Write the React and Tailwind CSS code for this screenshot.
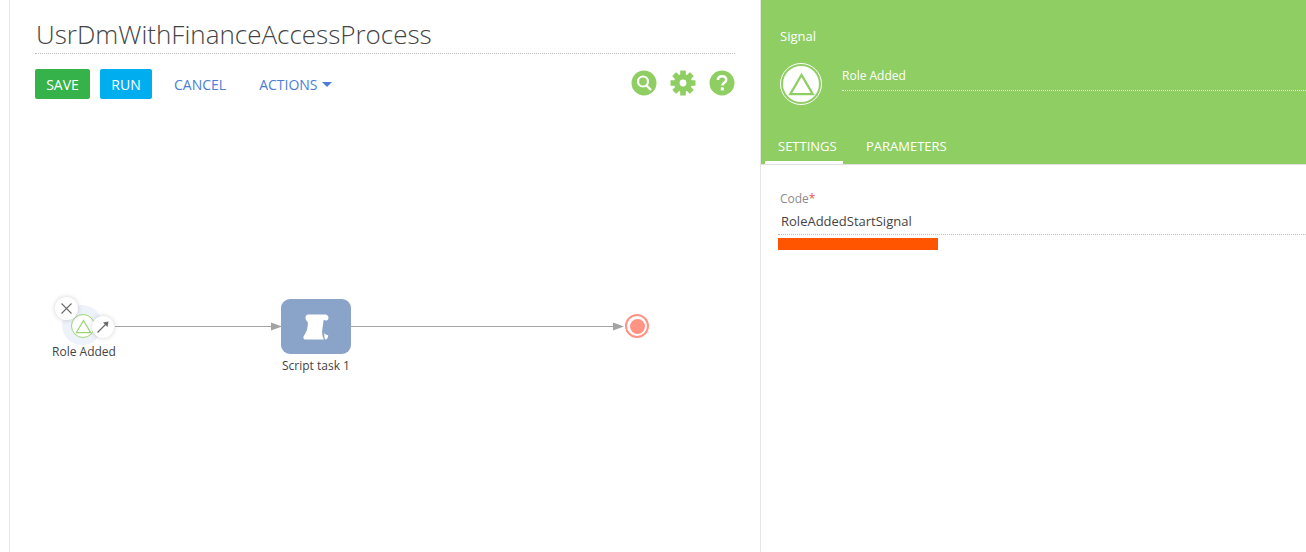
const font = { fontFamily: '"Open Sans", sans-serif' };

function Triangle({ size, color, sw }) {
  return (
    <svg width={size} height={size} viewBox="0 0 24 24" fill="none">
      <path d="M12 3.5 L22 20.5 H2 Z" stroke={color} strokeWidth={sw} strokeLinejoin="miter" />
    </svg>
  );
}

function SearchIcon() {
  return (
    <svg width="26" height="26" viewBox="0 0 26 26">
      <circle cx="13" cy="13" r="12.5" fill="#8fce63" />
      <circle cx="12" cy="11.5" r="5" fill="none" stroke="#fff" strokeWidth="2.2" />
      <path d="M15.5 15.5 L20 20" stroke="#fff" strokeWidth="2.4" />
    </svg>
  );
}

function GearIcon() {
  const teeth = [0, 45, 90, 135, 180, 225, 270, 315];
  return (
    <svg width="26" height="26" viewBox="0 0 26 26">
      {teeth.map((a) => (
        <rect key={a} x="10.2" y="0.5" width="5.6" height="6" rx="0.6" fill="#8fce63" transform={`rotate(${a} 13 13)`} />
      ))}
      <circle cx="13" cy="13" r="9" fill="#8fce63" />
      <circle cx="13" cy="13" r="3.4" fill="#fff" />
    </svg>
  );
}

function HelpIcon() {
  return (
    <svg width="26" height="26" viewBox="0 0 26 26">
      <circle cx="13" cy="13" r="12.5" fill="#8fce63" />
      <path d="M8.9 10 C9 7.4 10.8 6.2 13.1 6.2 C15.5 6.2 17.2 7.6 17.2 9.7 C17.2 12.6 13.3 12.7 13.3 15.6" fill="none" stroke="#fff" strokeWidth="2.5" />
      <rect x="11.8" y="17.4" width="3" height="3" fill="#fff" />
    </svg>
  );
}

function Scroll() {
  return (
    <svg width="26" height="26" viewBox="0 0 26 26" fill="#fff">
      <path d="M5 .5 H22 C24.5 .5 25.8 2.4 25.4 4.4 C25 6.3 23.2 7 22 6.3 C21.2 5.8 20.6 6 20.4 7.4 L19.2 16.5 C19 20 19.4 23 21 25.5 H2.5 C.6 25.5 -.2 23.6 .8 22 C3 19 4.4 15 4.8 11 C5 9 5.1 8 4 7.2 C1.8 5.6 2 .5 5 .5 Z" />
      <path d="M21.4 19 C22.6 20.6 23.8 21.2 25.2 21.2 C25.2 23.8 24 25.5 22.6 25.5 C21.6 25 21 22 21.4 19 Z" />
    </svg>
  );
}

function Canvas() {
  return (
    <div className="relative flex-1 mt-[20px]">
      {/* connectors */}
      <svg className="absolute left-0 top-0" width="751" height="430" fill="none">
        <path d="M105 207.5 H265" stroke="#a3a3a3" strokeWidth="1" />
        <path d="M261 203.5 L272 207.5 L261 211.5 Z" fill="#a3a3a3" />
        <path d="M341 207.5 H605" stroke="#a3a3a3" strokeWidth="1" />
        <path d="M603 203.5 L614 207.5 L603 211.5 Z" fill="#a3a3a3" />
      </svg>

      {/* selected start signal */}
      <div className="absolute left-[52px] top-[186px] w-[40px] h-[40px] rounded-full bg-[#eef2fb]" />
      <div className="absolute left-[61px] top-[195px] w-[24px] h-[24px] rounded-full bg-white border border-[#9bd573] flex items-center justify-center">
        <Triangle size={17} color="#9bd573" sw={1.8} />
      </div>
      <div className="absolute left-[45px] top-[178px] w-[23px] h-[23px] rounded-full bg-white shadow-[0_0_5px_rgba(0,0,0,0.18)] flex items-center justify-center">
        <svg width="13" height="13" viewBox="0 0 13 13" fill="none">
          <path d="M1.5 1.5 L11.5 11.5 M11.5 1.5 L1.5 11.5" stroke="#6b6b6b" strokeWidth="1.1" />
        </svg>
      </div>
      <div className="absolute left-[82px] top-[197px] w-[22px] h-[22px] rounded-full bg-white shadow-[0_0_5px_rgba(0,0,0,0.18)] flex items-center justify-center">
        <svg width="14" height="14" viewBox="0 0 14 14" fill="none">
          <path d="M1.5 12.5 L10 4" stroke="#6b6b6b" strokeWidth="1.2" />
          <path d="M7 2.5 L12.5 1.5 L11.5 7 Z" fill="#6b6b6b" />
        </svg>
      </div>
      <div className="absolute left-[24px] top-[225px] w-[100px] text-center text-[12px] leading-[16px] text-[#444]">Role Added</div>

      {/* script task */}
      <div className="absolute left-[271px] top-[180px] w-[70px] h-[55px] rounded-[9px] bg-[#8aa3c8] flex items-center justify-center">
        <Scroll />
      </div>
      <div className="absolute left-[256px] top-[239px] w-[100px] text-center text-[12px] leading-[16px] text-[#444]">Script task 1</div>

      {/* end */}
      <div className="absolute left-[615px] top-[195px] w-[24px] h-[24px] rounded-full border-2 border-[#ff9384] bg-white flex items-center justify-center">
        <div className="w-[15px] h-[15px] rounded-full bg-[#ff9384]" />
      </div>
    </div>
  );
}

export default function App() {
  return (
    <div className="flex w-[1306px] h-[552px] bg-white overflow-hidden" style={font}>
      <div className="w-[10px] shrink-0 border-r border-[#e6e6e6]" />

      <div className="w-[751px] shrink-0 flex flex-col border-r border-[#e6e6e6]">
        <div className="ml-[25px] mr-[25px] mt-[15px] h-[39px] border-b border-dotted border-[#bdbdbd] pl-[1px]">
          <div className="text-[26px] leading-[39px] font-light text-[#444]">UsrDmWithFinanceAccessProcess</div>
        </div>

        <div className="ml-[25px] mr-[25px] mt-[15px] h-[30px] flex items-center">
          <div className="w-[55px] h-[30px] rounded-[2px] bg-[#35b34a] text-white text-[14px] flex items-center justify-center">SAVE</div>
          <div className="ml-[10px] w-[52px] h-[30px] rounded-[2px] bg-[#00aeef] text-white text-[14px] flex items-center justify-center">RUN</div>
          <div className="ml-[22px] text-[14px] text-[#4b7ed6]">CANCEL</div>
          <div className="ml-[33px] flex items-center text-[14px] text-[#4b7ed6]">
            ACTIONS
            <span className="ml-[4px] w-0 h-0 border-l-[5px] border-r-[5px] border-t-[5px] border-l-transparent border-r-transparent border-t-[#4b7ed6]" />
          </div>
          <div className="ml-auto flex items-center gap-[13px] -mt-[3px]">
            <SearchIcon />
            <GearIcon />
            <HelpIcon />
          </div>
        </div>

        <Canvas />
      </div>

      <div className="flex-1 flex flex-col">
        <div className="h-[165px] bg-[#8fce63] border-b border-[#e0e0e0] flex flex-col text-white">
          <div className="ml-[19px] mt-[27px] text-[13px] leading-[18px]">Signal</div>
          <div className="ml-[19px] mt-[18px] flex">
            <div className="w-[42px] h-[42px] rounded-full border border-white p-[2px] shrink-0">
              <div className="w-full h-full rounded-full bg-white flex items-center justify-center">
                <Triangle size={27} color="#8fce63" sw={2} />
              </div>
            </div>
            <div className="ml-[20px] flex-1 h-[28px] border-b border-dotted border-white text-[12px] leading-[26px]">Role Added</div>
          </div>
          <div className="mt-auto ml-[4px] flex text-[13px]">
            <div className="w-[78px] h-[32px] border-b-[3px] border-white pl-[13px] pt-[5px] leading-[18px]">SETTINGS</div>
            <div className="ml-[23px] pt-[5px] leading-[18px]">PARAMETERS</div>
          </div>
        </div>

        <div className="pl-[17px] pt-[25px]">
          <div className="text-[12px] leading-[18px] text-[#8c8c8c] pl-[2px]">
            Code<span className="text-[#e5554f]">*</span>
          </div>
          <div className="h-[27px] border-b border-dotted border-[#bdbdbd] text-[13px] leading-[26px] text-[#444] pl-[3px]">RoleAddedStartSignal</div>
          <div className="mt-[3px] w-[160px] h-[12px] bg-[#ff5500]" />
        </div>
      </div>
    </div>
  );
}
